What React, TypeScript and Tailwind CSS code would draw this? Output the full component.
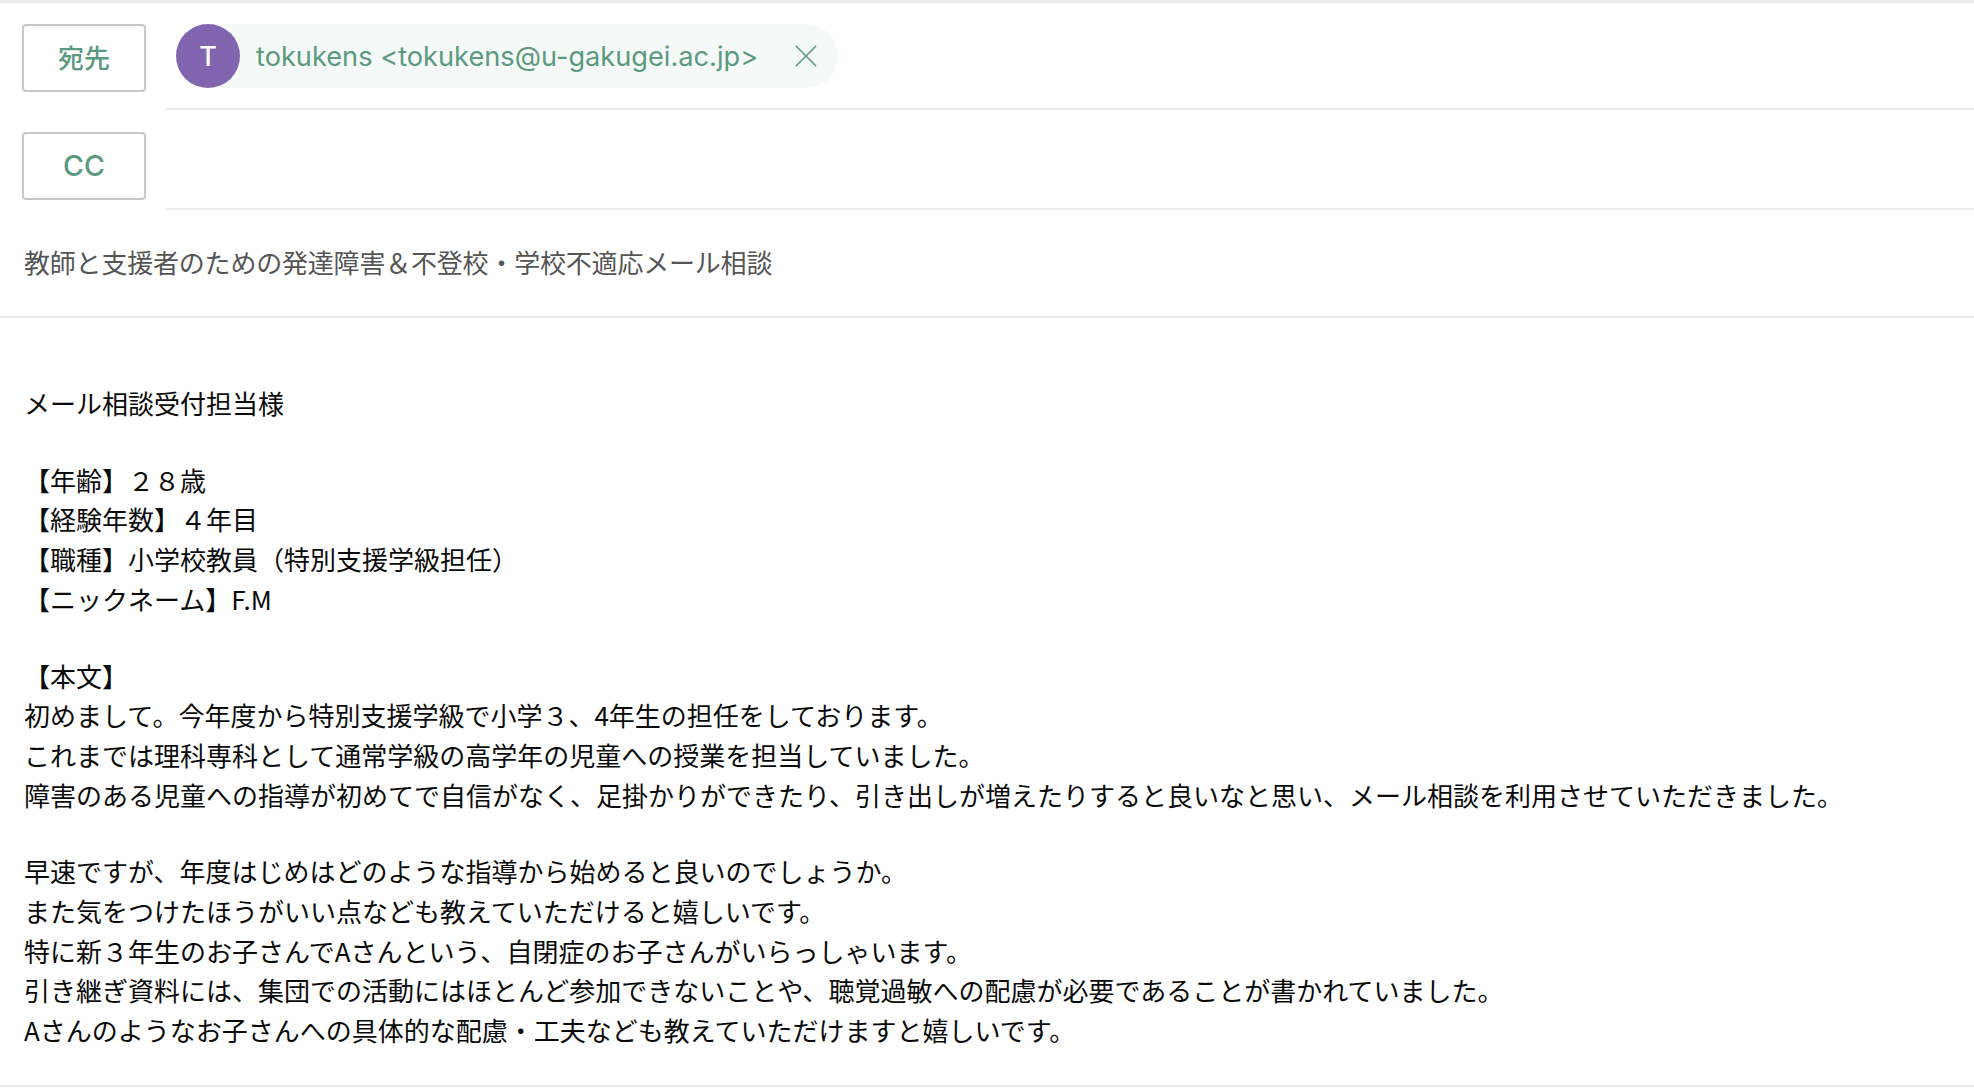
const bodyFont = '[font-family:"Noto_Sans_CJK_JP","Noto_Sans",sans-serif]'

const blocks = [
	['メール相談受付担当様'],
	['【年齢】２８歳', '【経験年数】４年目', '【職種】小学校教員（特別支援学級担任）', '【ニックネーム】F.M'],
	[
		'【本文】',
		'初めまして。今年度から特別支援学級で小学３、4年生の担任をしております。',
		'これまでは理科専科として通常学級の高学年の児童への授業を担当していました。',
		'障害のある児童への指導が初めてで自信がなく、足掛かりができたり、引き出しが増えたりすると良いなと思い、メール相談を利用させていただきました。',
	],
	[
		'早速ですが、年度はじめはどのような指導から始めると良いのでしょうか。',
		'また気をつけたほうがいい点なども教えていただけると嬉しいです。',
		'特に新３年生のお子さんでAさんという、自閉症のお子さんがいらっしゃいます。',
		'引き継ぎ資料には、集団での活動にはほとんど参加できないことや、聴覚過敏への配慮が必要であることが書かれていました。',
		'Aさんのようなお子さんへの具体的な配慮・工夫なども教えていただけますと嬉しいです。',
	],
]

function FieldButton({ label, className = '' }: { label: string; className?: string }) {
	return (
		<div className={`flex h-[68px] w-[124px] shrink-0 items-center justify-center rounded-[4px] border-2 border-[#c8c8c8] font-['Inter','Noto_Sans_CJK_JP',sans-serif] font-medium text-[#5b9a80] ${className}`}>
			{label}
		</div>
	)
}

export default function App() {
	return (
		<div className={`h-[1092px] w-[1974px] overflow-hidden bg-white ${bodyFont}`}>
			<div className="h-[3px] bg-[#ececec]" />

			{/* To */}
			<div className="flex h-[107px] items-start pl-[22px] pt-[21px]">
				<FieldButton label="宛先" className="text-[26px]" />
				<div className="ml-[20px] flex h-[86px] flex-1 items-start border-b-2 border-[#ececec] pl-[10px]">
					<div className="flex h-[64px] w-[662px] items-center rounded-full bg-[#f5f9f8]">
						<div className="flex h-[64px] w-[64px] shrink-0 items-center justify-center rounded-full bg-[#8265b0] pt-[2px] font-['Inter',sans-serif] text-[27px] font-medium text-white">
							T
						</div>
						<span className="ml-[16px] pt-[2px] font-['Inter',sans-serif] text-[27.2px] text-[#5b9a80]">
							tokukens &lt;tokukens@u-gakugei.ac.jp&gt;
						</span>
						<svg className="ml-auto mr-[21px]" width="22" height="22" viewBox="0 0 22 22" fill="none" stroke="#5b9a80" strokeWidth="1.6">
							<path d="M1 1 L21 21 M21 1 L1 21" />
						</svg>
					</div>
				</div>
			</div>

			{/* Cc */}
			<div className="flex h-[100px] items-start pl-[22px] pt-[22px]">
				<FieldButton label="CC" className="text-[28.5px]" />
				<div className="ml-[20px] h-[78px] flex-1 border-b-2 border-[#ececec]" />
			</div>

			{/* Subject */}
			<div className="flex h-[108px] items-center border-b-2 border-[#ececec] pb-[4px] pl-[24px] text-[26px] tracking-[-0.2px] text-[#555555]">
				教師と支援者のための発達障害＆不登校・学校不適応メール相談
			</div>

			{/* Body */}
			<div className="h-[769px] border-b-2 border-[#ececec] pl-[24px] pt-[65px] text-[26px] leading-[39.7px] text-[#0a0a0a]">
				{blocks.map((lines, i) => (
					<div key={i} className="mb-[37px]">
						{lines.map((line) => (
							<div key={line} className="whitespace-nowrap">
								{line}
							</div>
						))}
					</div>
				))}
			</div>
		</div>
	)
}
